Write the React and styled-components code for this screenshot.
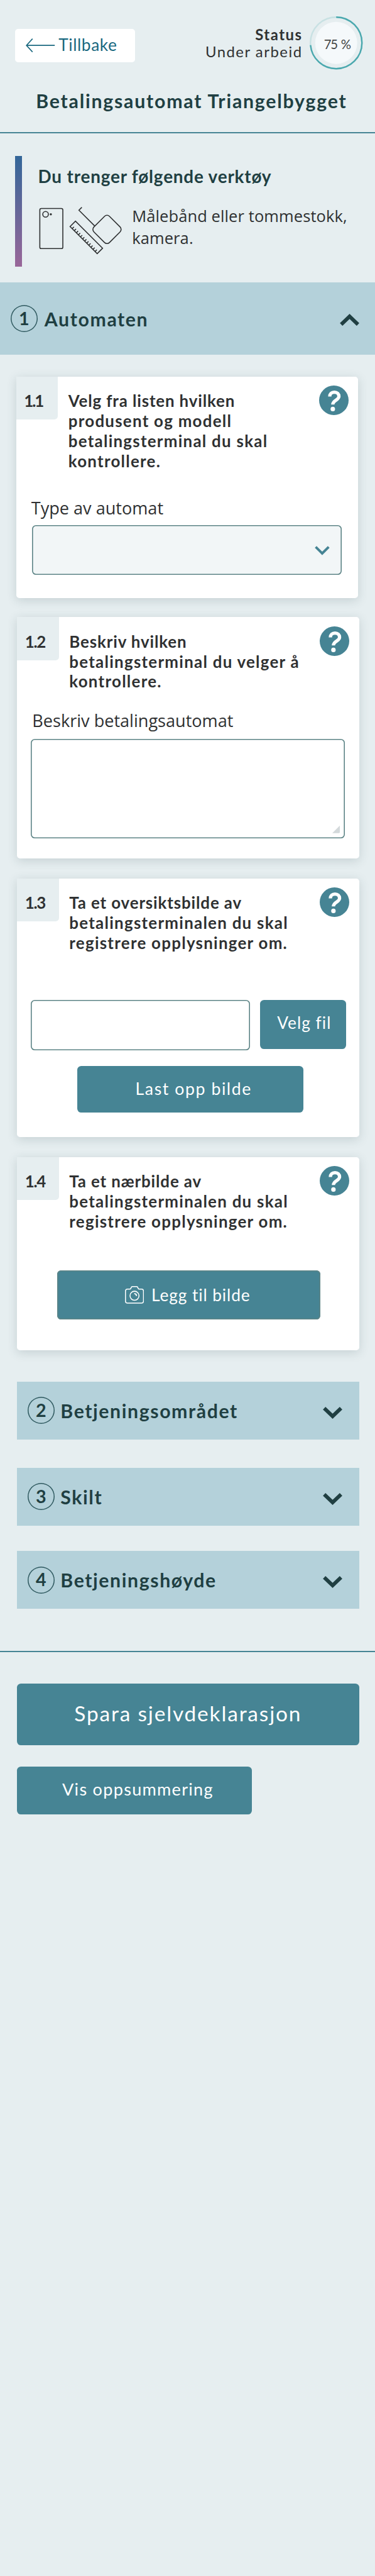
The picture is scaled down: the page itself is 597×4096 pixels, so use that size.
import React from "react";
import styled, { createGlobalStyle, css } from "styled-components";

const color = {
  page: "#e6eef0",
  band: "#b4d1da",
  teal: "#468494",
  link: "#19687f",
  heading: "#203f42",
  text: "#2f3132",
  outline: "#5d8486",
};

const GlobalStyle = createGlobalStyle`
  *, *::before, *::after { box-sizing: border-box; }
  html { font-size: 7.965px; background: ${color.page}; }
  body { margin: 0; background: ${color.page}; }
  svg { display: block; flex: none; }
  button { border: 0; margin: 0; cursor: pointer; font-family: inherit; }
`;

const Page = styled.main`
  min-height: 100vh;
  overflow: hidden;
  color: ${color.text};
  background: ${color.page};
  font-family: Lato, "Open Sans", sans-serif;
  font-size: 3.2rem;
`;

/* Header */

const Header = styled.header`
  height: 26.6rem;
  padding-top: 3.3rem;
  border-bottom: 2px solid ${color.teal};
`;

const TopRow = styled.div`
  display: flex;
  align-items: center;
  height: 10.6rem;
  padding: 0 2.4rem 0 3rem;
`;

const BackButton = styled.button`
  display: flex;
  align-items: center;
  width: 24rem;
  height: 6.6rem;
  margin-top: 1rem;
  padding: 0 0 0 2.2rem;
  border-radius: 0.6rem;
  background: #fff;
  color: ${color.link};
  font-size: 3.3rem;
  letter-spacing: 0.08rem;
`;

const BackLabel = styled.span`
  margin-left: 0.6rem;
  padding-bottom: 0.3rem;
`;

const Status = styled.div`
  margin-left: auto;
  text-align: right;
  font-size: 3rem;
  line-height: 3.4rem;
  letter-spacing: 0.19rem;
`;

const StatusTitle = styled.div`
  font-weight: 700;
`;

const Progress = styled.div`
  display: grid;
  place-items: center;
  margin-left: 1.5rem;
  > * { grid-area: 1 / 1; }
`;

const ProgressLabel = styled.span`
  padding: 0.4rem 0 0 0.3rem;
  color: #444747;
  font-size: 2.55rem;
  letter-spacing: -0.13rem;
  word-spacing: 0.2rem;
`;

const Title = styled.h1`
  margin: 3.8rem 0 0;
  padding-left: 1.6rem;
  color: ${color.heading};
  font-size: 3.8rem;
  line-height: 4.8rem;
  letter-spacing: 0.224rem;
  text-align: center;
  white-space: nowrap;
`;

/* Tools */

const Tools = styled.section`
  display: flex;
  height: 22rem;
  margin: 4.6rem 3rem 3.2rem;
`;

const ToolsBar = styled.div`
  width: 1.4rem;
  background: linear-gradient(#336699, #996699);
`;

const ToolsBody = styled.div`
  padding: 1.8rem 0 0 3.2rem;
`;

const ToolsTitle = styled.h2`
  margin: 0;
  color: ${color.heading};
  font-size: 3.5rem;
  line-height: 4.4rem;
  letter-spacing: 0.103rem;
`;

const ToolsRow = styled.div`
  display: flex;
  align-items: flex-start;
  margin-top: 3.5rem;
`;

const ToolsText = styled.p`
  margin: 0 0 0 1.8rem;
  font-family: "Open Sans", "Noto Sans", sans-serif;
  font-size: 3.2rem;
  line-height: 4.4rem;
  letter-spacing: 0.014rem;
  white-space: nowrap;
`;

/* Section headings */

const SectionBar = styled.div`
  display: flex;
  align-items: center;
  color: ${color.heading};
  background: ${color.band};
  ${(p) =>
    p.$open
      ? css`
          height: 14.4rem;
          padding: 0 3.1rem 0 2.1rem;
        `
      : css`
          height: 11.6rem;
          margin: 0 3.2rem 0 3.4rem;
          padding: 0 3.3rem 0 2.1rem;
        `}
`;

const SectionNumber = styled.span`
  display: flex;
  align-items: center;
  justify-content: center;
  width: 5.4rem;
  height: 5.4rem;
  padding-bottom: 0.2rem;
  border-radius: 50%;
  box-shadow: inset 0 0 0 1.5px #305a60;
  font-size: 3.6rem;
  font-weight: 700;
`;

const SectionTitle = styled.h2`
  flex: 1;
  margin: 0;
  padding-left: ${(p) => (p.$open ? "1.4rem" : "1.2rem")};
  padding-top: ${(p) => (p.$open ? "0.2rem" : "0")};
  font-size: 3.8rem;
  letter-spacing: 0.2rem;
`;

const SectionChevron = styled.div`
  padding-top: ${(p) => (p.$open ? "0.4rem" : "1rem")};
`;

const SectionList = styled.div`
  display: flex;
  flex-direction: column;
  padding: 6.2rem 0 8.4rem;
  border-bottom: 2px solid ${color.teal};
  > :nth-child(2) { margin-top: 5.6rem; }
  > :nth-child(3) { margin-top: 5rem; }
`;

/* Question cards */

const Cards = styled.div`
  display: flex;
  flex-direction: column;
  gap: 4rem;
  padding: 4.4rem 3.2rem 0 3.4rem;
`;

const Card = styled.article`
  height: ${(p) => p.$height}rem;
  border-radius: 0 0.6rem 0.6rem 0.6rem;
  background: #fff;
  box-shadow: 0 0.4rem 2rem rgba(40, 70, 75, 0.17);
  &:first-child { margin: 0 0.2rem -0.2rem -0.2rem; }
`;

const CardHead = styled.div`
  display: flex;
  align-items: flex-start;
  padding-right: 1.9rem;
`;

const Badge = styled.span`
  width: 8.4rem;
  height: 8.6rem;
  padding: 2.95rem 0 0 1.6rem;
  border-radius: 0 0 0.7rem 0;
  background: ${color.page};
  font-size: 3.25rem;
  font-weight: 700;
  line-height: 4rem;
  letter-spacing: ${(p) => (p.$tight ? "-0.26rem" : "-0.17rem")};
`;

const Question = styled.h3`
  flex: 1;
  margin: 0;
  padding: 2.95rem 0 0 2.05rem;
  font-size: 3.25rem;
  line-height: 4rem;
  letter-spacing: 0.16rem;
  white-space: nowrap;
`;

const FirstLine = styled.span`
  letter-spacing: 0.11rem;
`;

const HelpButton = styled.button`
  margin-top: 1.8rem;
  padding: 0;
  background: none;
`;

const Label = styled.label`
  display: block;
  margin: ${(p) => p.$top}rem 0 0 3.05rem;
  font-family: "Open Sans", "Noto Sans", sans-serif;
  font-size: 3.4rem;
  line-height: 4.4rem;
`;

const Select = styled.div`
  display: flex;
  align-items: center;
  justify-content: flex-end;
  height: 9.9rem;
  margin: 1.3rem 3.2rem 0;
  padding: 0.4rem 2.5rem 0 0;
  border-radius: 0.8rem;
  box-shadow: inset 0 0 0 1.6px ${color.outline};
  background: #f2f6f7;
`;

const TextArea = styled.div`
  display: flex;
  align-items: flex-end;
  justify-content: flex-end;
  height: 19.8rem;
  margin: 1.5rem 2.8rem 0;
  padding: 0 1rem 1rem 0;
  border-radius: 0.8rem;
  box-shadow: inset 0 0 0 1.6px ${color.outline};
`;

const FileRow = styled.div`
  display: flex;
  align-items: flex-start;
  justify-content: space-between;
  margin: 9.3rem 2.6rem 3.2rem 2.8rem;
`;

const FileInput = styled.input`
  width: 43.8rem;
  height: 10rem;
  padding: 0 1.6rem;
  border: 0;
  border-radius: 0.8rem;
  box-shadow: inset 0 0 0 1.6px ${color.outline};
  background: #fff;
`;

/* Buttons */

const Button = styled.button`
  display: flex;
  align-items: center;
  justify-content: center;
  color: #fff;
  background: ${color.teal};
  border-radius: 0.8rem;
  white-space: nowrap;
`;

const ChooseFileButton = styled(Button)`
  width: 17.2rem;
  height: 9.8rem;
  padding: 0 0 0.9rem 0.5rem;
  font-size: 3.3rem;
  letter-spacing: 0.13rem;
`;

const UploadButton = styled(Button)`
  width: 45.2rem;
  height: 9.2rem;
  margin-left: 12rem;
  padding: 0 0 0.2rem 1.4rem;
  font-size: 3.35rem;
  letter-spacing: 0.196rem;
`;

const AddPhotoButton = styled(Button)`
  gap: 1.5rem;
  width: 52.6rem;
  height: 9.8rem;
  margin: 7.7rem 0 0 8rem;
  padding: 0 0.4rem 0 0;
  box-shadow: inset 0 0 0 1.6px ${color.outline};
  font-size: 3.3rem;
  letter-spacing: 0.115rem;
`;

const Actions = styled.footer`
  display: flex;
  flex-direction: column;
  align-items: flex-start;
  gap: 4.2rem;
  padding: 6.2rem 3.2rem 0 3.4rem;
`;

const SaveButton = styled(Button)`
  width: 100%;
  height: 12.4rem;
  padding: 0 0 0.4rem;
  font-size: 4.2rem;
  letter-spacing: 0.231rem;
`;

const SummaryButton = styled(Button)`
  width: 47rem;
  height: 9.6rem;
  padding: 0 0 0.6rem 1.3rem;
  font-size: 3.4rem;
  letter-spacing: 0.16rem;
`;

const Icon = styled.svg`
  width: ${(p) => p.$w}rem;
  height: ${(p) => p.$h}rem;
`;

const BackArrow = () => (
  <Icon $w={5.9} $h={2.8} viewBox="0 0 59 28" fill="none" stroke={color.link} strokeWidth="2">
    <path d="M13.5 0.8L1.4 14L13.5 27.2M1.4 14H58" />
  </Icon>
);

const ProgressRing = ({ value }) => (
  <Icon $w={10.6} $h={10.6} viewBox="0 0 106 106" fill="none">
    <circle cx="53" cy="53" r="42" fill="#f5f9fb" />
    <circle cx="53" cy="53" r="51.5" stroke="#c8e1e3" strokeWidth="3" />
    <circle
      cx="53"
      cy="53"
      r="51.5"
      stroke="#4aa8ae"
      strokeWidth="3"
      pathLength="100"
      strokeDasharray={`${value} 100`}
      transform="rotate(-90 53 53)"
    />
  </Icon>
);

const ticks = Array.from({ length: 12 }, (_, i) => {
  const x = 145.6 + i * 4.15;
  const y = 457.2 + i * 4.15;
  return `M${x} ${y}l3.6 -3.6`;
}).join("");

const ToolsIcon = () => (
  <Icon $w={17} $h={10} viewBox="78 410 170 100" fill="none" stroke={color.text} strokeWidth="2">
    <rect x="81" y="417" width="46" height="80" rx="3" />
    <circle cx="92.5" cy="428.5" r="5.6" />
    <circle cx="103" cy="428.5" r="2.1" fill={color.text} stroke="none" />
    <path d="M152.3 442.2L141.5 453L195.7 507L206.5 496.2Z" />
    <path d={ticks} />
    <path d="M165 414.5L159.2 420.3L190.5 451.6" />
    <rect x="193.3" y="436.7" width="44" height="44" rx="7" transform="rotate(45 215.3 458.7)" />
  </Icon>
);

const Chevron = ({ up }) => (
  <Icon $w={3.9} $h={2.4} viewBox="0 0 39 24" fill="none" stroke={color.heading} strokeWidth="7.4">
    <path d={up ? "M2.7 21.3L19.5 5.2L36.3 21.3" : "M2.7 2.7L19.5 18.8L36.3 2.7"} />
  </Icon>
);

const SelectChevron = () => (
  <Icon $w={3} $h={1.9} viewBox="0 0 30 19" fill="none" stroke={color.teal} strokeWidth="5">
    <path d="M2 2L15 15L28 2" />
  </Icon>
);

const HelpIcon = () => (
  <Icon $w={5.9} $h={5.9} viewBox="0 0 59 59" fill="none">
    <circle cx="29.5" cy="29.5" r="29.5" fill={color.teal} />
    <path
      d="M21.3 22C21.3 16.5 25 13.2 30.5 13.2C36 13.2 39.7 17 39.7 21.8C39.7 29.5 27.4 29 27.4 38"
      stroke="#fff"
      strokeWidth="6.6"
    />
    <circle cx="27.4" cy="47" r="4.5" fill="#fff" />
  </Icon>
);

const CameraIcon = () => (
  <Icon $w={3.8} $h={3.5} viewBox="0 0 38 35" fill="none" stroke="#fff" strokeWidth="1.9" strokeLinejoin="round">
    <path d="M5 6H9.5Q11 6 11.8 4.2L12.7 2.3Q13.3 1 14.8 1H23.2Q24.7 1 25.3 2.3L26.2 4.2Q27 6 28.5 6H33Q37 6 37 10V30Q37 34 33 34H5Q1 34 1 30V10Q1 6 5 6Z" />
    <circle cx="19" cy="19.2" r="9" />
    <path d="M18.5 14.9Q22.8 15.2 23 19.6" strokeWidth="2.4" />
  </Icon>
);

const Grip = () => (
  <Icon $w={1.6} $h={1.6} viewBox="0 0 16 16">
    <path d="M16 0V12.5Q16 16 12.5 16H0Z" fill="#d3d9db" />
  </Icon>
);

const QuestionCard = ({ number, lines, height, children }) => (
  <Card $height={height}>
    <CardHead>
      <Badge $tight={number === "1.1"}>{number}</Badge>
      <Question>
        <FirstLine>{lines[0]}</FirstLine>
        {lines.slice(1).map((line) => (
          <React.Fragment key={line}>
            <br />
            {line}
          </React.Fragment>
        ))}
      </Question>
      <HelpButton aria-label="Hjelp">
        <HelpIcon />
      </HelpButton>
    </CardHead>
    {children}
  </Card>
);

const Section = ({ number, title, open }) => (
  <SectionBar $open={open}>
    <SectionNumber>{number}</SectionNumber>
    <SectionTitle $open={open}>{title}</SectionTitle>
    <SectionChevron $open={open}>
      <Chevron up={open} />
    </SectionChevron>
  </SectionBar>
);

export default function App() {
  return (
    <Page>
      <GlobalStyle />
      <Header>
        <TopRow>
          <BackButton>
            <BackArrow />
            <BackLabel>Tillbake</BackLabel>
          </BackButton>
          <Status>
            <StatusTitle>Status</StatusTitle>
            <div>Under arbeid</div>
          </Status>
          <Progress>
            <ProgressRing value={73.6} />
            <ProgressLabel>75 %</ProgressLabel>
          </Progress>
        </TopRow>
        <Title>Betalingsautomat Triangelbygget</Title>
      </Header>

      <Tools>
        <ToolsBar />
        <ToolsBody>
          <ToolsTitle>Du trenger følgende verktøy</ToolsTitle>
          <ToolsRow>
            <ToolsIcon />
            <ToolsText>
              Målebånd eller tommestokk,
              <br />
              kamera.
            </ToolsText>
          </ToolsRow>
        </ToolsBody>
      </Tools>

      <Section number="1" title="Automaten" open />

      <Cards>
        <QuestionCard
          number="1.1"
          height={44.2}
          lines={["Velg fra listen hvilken", "produsent og modell", "betalingsterminal du skal", "kontrollere."]}
        >
          <Label $top={5}>Type av automat</Label>
          <Select>
            <SelectChevron />
          </Select>
        </QuestionCard>
        <QuestionCard
          number="1.2"
          height={48.2}
          lines={["Beskriv hvilken", "betalingsterminal du velger å", "kontrollere."]}
        >
          <Label $top={3.5}>Beskriv betalingsautomat</Label>
          <TextArea>
            <Grip />
          </TextArea>
        </QuestionCard>
        <QuestionCard
          number="1.3"
          height={51.6}
          lines={["Ta et oversiktsbilde av", "betalingsterminalen du skal", "registrere opplysninger om."]}
        >
          <FileRow>
            <FileInput aria-label="Fil" />
            <ChooseFileButton>Velg fil</ChooseFileButton>
          </FileRow>
          <UploadButton>Last opp bilde</UploadButton>
        </QuestionCard>
        <QuestionCard
          number="1.4"
          height={38.6}
          lines={["Ta et nærbilde av", "betalingsterminalen du skal", "registrere opplysninger om."]}
        >
          <AddPhotoButton>
            <CameraIcon />
            Legg til bilde
          </AddPhotoButton>
        </QuestionCard>
      </Cards>

      <SectionList>
        <Section number="2" title="Betjeningsområdet" />
        <Section number="3" title="Skilt" />
        <Section number="4" title="Betjeningshøyde" />
      </SectionList>

      <Actions>
        <SaveButton>Spara sjelvdeklarasjon</SaveButton>
        <SummaryButton>Vis oppsummering</SummaryButton>
      </Actions>
    </Page>
  );
}
